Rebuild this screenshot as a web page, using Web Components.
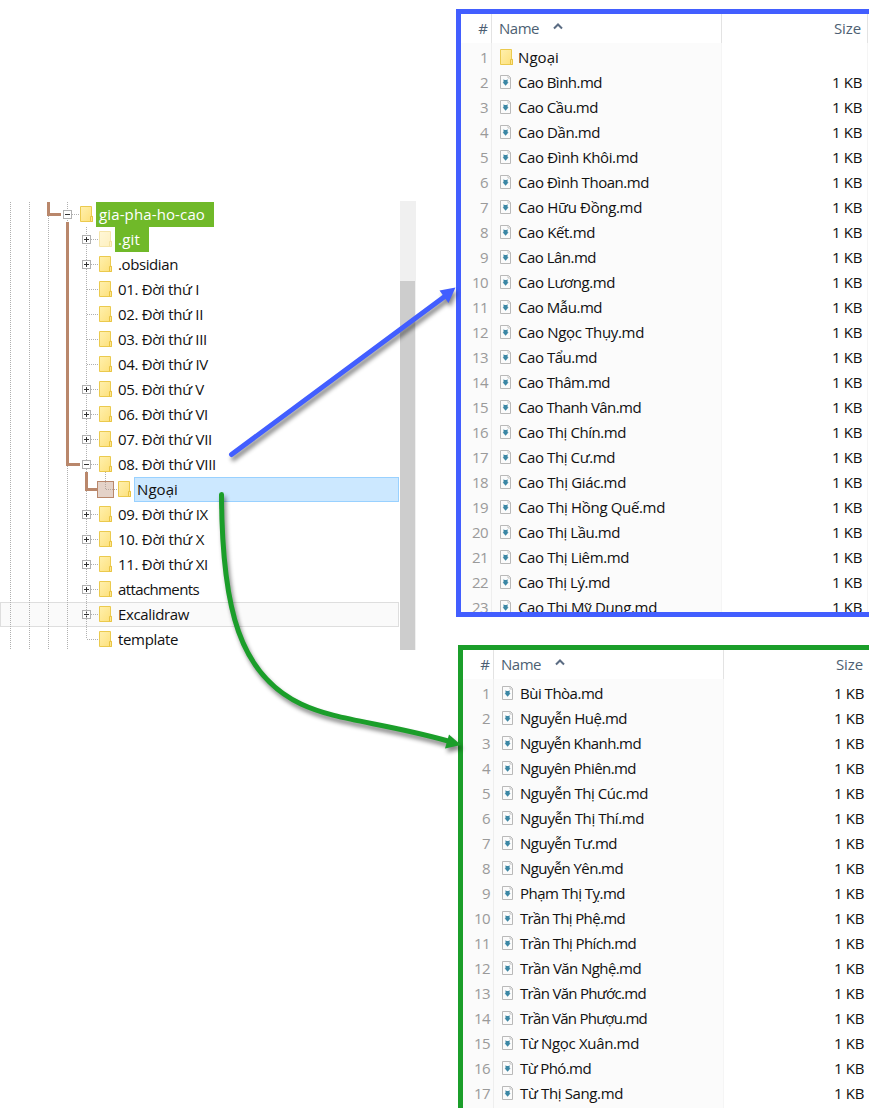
<!DOCTYPE html>
<html lang="vi"><head><meta charset="utf-8"><title>gia-pha-ho-cao</title>
<style>
html,body{margin:0;height:1108px;overflow:hidden;background:#fff}
body{font:15px/25px "Open Sans","Noto Sans",sans-serif;color:#111}
</style></head><body><folder-map></folder-map>
<script>
class FitText extends HTMLElement{
  connectedCallback(){
    const r=this.attachShadow({mode:'open'});
    r.innerHTML='<style>:host{display:inline-block;white-space:pre}span{display:inline-block}</style><span><slot></slot></span>';
    const s=r.querySelector('span'),w=+this.getAttribute('w');
    if(w){const n=[...this.textContent.normalize('NFC')].length;s.style.letterSpacing=((w-s.getBoundingClientRect().width)/n)+'px'}
  }
}
customElements.define('fit-text',FitText);
class FolderIcon extends HTMLElement{
  connectedCallback(){this.attachShadow({mode:'open'}).innerHTML=`<style>:host{display:block;width:14px;height:17px}:host([pale]){opacity:.48}svg{display:block}</style>
  <svg width="14" height="17" viewBox="0 0 14 17"><defs><linearGradient id="g" x2="1" y2="1"><stop stop-color="#fff0ae"/><stop offset="1" stop-color="#fde07a"/></linearGradient></defs><path d="M.5.5h11v9.800h1v5.2H.5z" fill="url(#g)" stroke="#ebca4e"/><path d="M10.500 15.500v-5h2v5z" fill="#ffe68d" stroke="#e8c444"/></svg>`}
}
customElements.define('folder-icon',FolderIcon);
class NoteIcon extends HTMLElement{
  connectedCallback(){this.attachShadow({mode:'open'}).innerHTML=`<style>:host{display:block;width:12px;height:15px;padding-top:1px}svg{display:block}</style>
  <svg width="12" height="14" viewBox="0 0 12 14"><path d="M.5.5h8l2 2v11H.5z" fill="#fbfbfb" stroke="#b9b9b9"/><path d="M8 .5v2.500h2.500" fill="none" stroke="#c4c4c4"/><path d="M3.500 4.300l1.200.8h1.700l1.200-.8v3h1L5.600 10.800 2.600 7.300h.9z" fill="#3b87a5"/></svg>`}
}
customElements.define('note-icon',NoteIcon);
class TreeRow extends HTMLElement{
  connectedCallback(){
    const lv=+this.getAttribute('level'),k=this.getAttribute('kind')||'',ex=this.getAttribute('exp');
    const pad=[80,99,118][lv];
    this.attachShadow({mode:'open'}).innerHTML=`<style>
    :host{display:flex;box-sizing:border-box;height:25px;width:399px;padding-left:${pad}px;position:relative}
    :host([kind=hover]){background:#fafafa;box-shadow:inset 0 0 0 1px #dedede}
    folder-icon{margin-top:4px;flex:none}
    .l{margin-left:2px;padding:0 9px 0 3px;height:25px;box-sizing:border-box;white-space:pre}
    .green{background:#70b929;color:#fff}
    .sel{background:#cce8ff;border:1px solid #99d1ff;flex:1;line-height:23px;padding-left:2px}
    svg{position:absolute;left:${pad-17}px;top:8px}
    </style>${ex?`<svg width="9" height="9"><rect x=".5" y=".5" width="8" height="8" fill="#fff" stroke="#b0b0b0"/><path d="M2 4.5h5${ex=='+'?'M4.500 2v5':''}" stroke="#333"/></svg>`:''}<folder-icon ${this.hasAttribute('pale')?'pale':''}></folder-icon><div class="l ${k}"><slot></slot></div>`;
  }
}
customElements.define('tree-row',TreeRow);
class TreeGuides extends HTMLElement{
  connectedCallback(){
    let d='';for(const x of[10.5,29.5,48.5,67.5])d+=`M${x} 0V448`;
    d+='M86.500 25V437M72 12.500H79M105.500 268V287.500H117';
    for(let i=1;i<18;i++)if(i!=11)d+=`M${91-(/^(3|4|5|6|17)$/.test(i)?4:0)} ${i*25+12.5}H98`;
    this.attachShadow({mode:'open'}).innerHTML=`<style>:host{position:absolute;left:0;top:0;display:block}svg{display:block}</style>
    <svg width="140" height="448"><path d="${d}" stroke="#b0b0b0" stroke-dasharray="1 1" fill="none"/>
    <path d="M48.500-1V12.500H61M67.500 20V262.500H80M86.500 270V287.500H97" fill="none" stroke="#b9876b" stroke-width="3"/>
    <rect x="97.500" y="279.500" width="16" height="16" fill="#e4d2c8" stroke="#b9876b"/><path d="M105.500 280V287.500H117" fill="none" stroke="#b5a79f" stroke-dasharray="1 1"/></svg>`;
  }
}
customElements.define('tree-guides',TreeGuides);
class FolderTree extends HTMLElement{
  connectedCallback(){
    const R=[['gia-pha-ho-cao',106,'-','green',0],['.git',22,'+','green'],['.obsidian',60,'+'],['01. Đời thứ I',81],['02. Đời thứ II',85],['03. Đời thứ III',89],['04. Đời thứ IV',90],['05. Đời thứ V',86,'+'],['06. Đời thứ VI',90,'+'],['07. Đời thứ VII',94,'+'],['08. Đời thứ VIII',98,'-'],['Ngoại',41,'','sel',2],['09. Đời thứ IX',90,'+'],['10. Đời thứ X',86,'+'],['11. Đời thứ XI',90,'+'],['attachments',81,'+'],['Excalidraw',71,'+','hover'],['template',60]];
    this.attachShadow({mode:'open'}).innerHTML=`<style>:host{display:flex;height:449px;width:416px;position:relative;padding-top:1px;box-sizing:border-box}
    .rows{position:relative;width:399px;height:448px;overflow:hidden;margin-right:1px}.bar{width:16px;height:449px;margin-top:-1px;background:#f0f0f0}.bar i{display:block;margin-top:80px;width:15px;height:369px;background:#cdcdcd}
    tree-guides{z-index:1}tree-row{z-index:2}tree-row[kind=hover]{z-index:0}.rows{isolation:isolate}</style>
    <div class="rows"><tree-guides></tree-guides>${R.map((r,i)=>`<tree-row level="${r[4]??1}" ${r[2]?`exp="${r[2]}"`:''} ${r[3]?`kind="${r[3]}"`:''} ${i==1?'pale':''}><fit-text w="${r[1]}">${r[0]}</fit-text></tree-row>`).join('')}</div><div class="bar"><i></i></div>`;
  }
}
customElements.define('folder-tree',FolderTree);
class FileRow extends HTMLElement{
  connectedCallback(){
    const f=this.hasAttribute('folder');
    this.attachShadow({mode:'open'}).innerHTML=`<style>:host{display:grid;grid-template-columns:27px 12px 18px 1fr auto;height:25px;padding-right:2px}
    .n{color:#9a9a9a;text-align:right}.i{grid-column:3;padding-top:4px}.s{margin-right:5px}</style>
    <span class="n"><fit-text w="${this.getAttribute('n')>9?16:8}">${this.getAttribute('n')}</fit-text></span><span class="i">${f?'<folder-icon></folder-icon>':'<note-icon></note-icon>'}</span><slot></slot><span class="s">${f?'':'<fit-text w="30">1 KB</fit-text>'}</span>`;
  }
}
customElements.define('file-row',FileRow);
class FileList extends HTMLElement{
  connectedCallback(){
    const L=this.files;
    this.attachShadow({mode:'open'}).innerHTML=`<style>:host{display:block;box-sizing:border-box;border:5px solid var(--edge);border-right:0;overflow:hidden;background:#fff}
    header{display:grid;grid-template-columns:31px 230px 1fr 1px;height:29px;line-height:29px;color:#4d5f73}
    header span{border-right:1px solid #e3e3e3;box-sizing:border-box}.h{text-align:right;padding-right:3px}.n{padding-left:7px;display:flex}.n svg{margin:9px 0 0 14px}.s{text-align:right;padding-right:6px}
    .b{padding-top:2px;height:575px;background:linear-gradient(#eee,#eee) 30px 0/1px 100% no-repeat,linear-gradient(#f5f5f5,#f5f5f5) 260px 0/1px 100% no-repeat,linear-gradient(#f5f5f5,#f5f5f5) 406px 0/1px 100% no-repeat,linear-gradient(#fbfbfb,#fbfbfb) 0 0/260px 100% no-repeat}</style>
    <header><span class="h">#</span><span class="n"><fit-text w="40">Name</fit-text><svg width="10" height="7"><path d="M1 5.500L5 1.500 9 5.500" fill="none" stroke="#5b6c83" stroke-width="2"/></svg></span><span class="s"><fit-text w="27">Size</fit-text></span></header>
    <div class="b">${L.map((r,i)=>`<file-row n="${i+1}" ${r[0]=='Ngoại'?'folder':''}><fit-text w="${r[1]}">${r[0]}</fit-text></file-row>`).join('')}</div>`;
  }
  get files(){return this.getAttribute('list')=='in'?
   [['Bùi Thòa.md',83],['Nguyễn Huệ.md',107],['Nguyễn Khanh.md',121],['Nguyên Phiên.md',116],['Nguyễn Thị Cúc.md',128],['Nguyễn Thị Thí.md',124],['Nguyễn Tư.md',97],['Nguyễn Yên.md',103],['Phạm Thị Tỵ.md',105],['Trần Thị Phệ.md',105],['Trần Thị Phích.md',116],['Trần Văn Nghệ.md',121],['Trần Văn Phước.md',126],['Trần Văn Phượu.md',127],['Từ Ngọc Xuân.md',119],['Từ Phó.md',71],['Từ Thị Sang.md',103]]:
   [['Ngoại',41],['Cao Bình.md',84],['Cao Cầu.md',80],['Cao Dần.md',82],['Cao Đình Khôi.md',120],['Cao Đình Thoan.md',131],['Cao Hữu Đồng.md',124],['Cao Kết.md',77],['Cao Lân.md',78],['Cao Lương.md',97],['Cao Mẫu.md',84],['Cao Ngọc Thụy.md',126],['Cao Tẩu.md',79],['Cao Thâm.md',92],['Cao Thanh Vân.md',123],['Cao Thị Chín.md',108],['Cao Thị Cư.md',97],['Cao Thị Giác.md',108],['Cao Thị Hồng Quế.md',147],['Cao Thị Lầu.md',102],['Cao Thị Liêm.md',111],['Cao Thị Lý.md',92],['Cao Thị Mỹ Dung.md',139]]}
}
customElements.define('file-list',FileList);
class LinkArrows extends HTMLElement{
  connectedCallback(){this.attachShadow({mode:'open'}).innerHTML=`<style>:host{position:absolute;inset:0;z-index:5;pointer-events:none}svg{display:block;filter:drop-shadow(2px 4px 2px #0007)}</style>
  <svg width="869" height="1108"><g fill="none" stroke-width="5" stroke-linecap="round"><path d="M231.500 454.500L444 297" stroke="#425eff"/><path d="M221.500 494.500C222 610 240 675 301 704C337 721 380 722 448 741" stroke="#1b9e2a"/></g><path d="M455.500 287.500L439.500 290.500 448.500 303z" fill="#425eff"/><path d="M461 745L449 734.500 445 748.500z" fill="#1b9e2a"/></svg>`}
}
customElements.define('link-arrows',LinkArrows);
class FolderMap extends HTMLElement{
  connectedCallback(){this.attachShadow({mode:'open'}).innerHTML=`<style>:host{display:grid;grid-template-columns:456px 413px;width:869px;height:1108px;position:relative;overflow:hidden}
  folder-tree{margin-top:201px}.lists{padding-top:9px;display:flex;flex-direction:column;gap:28px;height:1099px}
  .a{--edge:#425eff;height:608px;flex:none}.z{--edge:#1b9e2a;height:620px;flex:none;margin-left:2px;width:413px}</style>
  <folder-tree></folder-tree><div class="lists"><file-list class="a" list="out"></file-list><file-list class="z" list="in"></file-list></div><link-arrows></link-arrows>`}
}
customElements.define('folder-map',FolderMap);
</script></body></html>
